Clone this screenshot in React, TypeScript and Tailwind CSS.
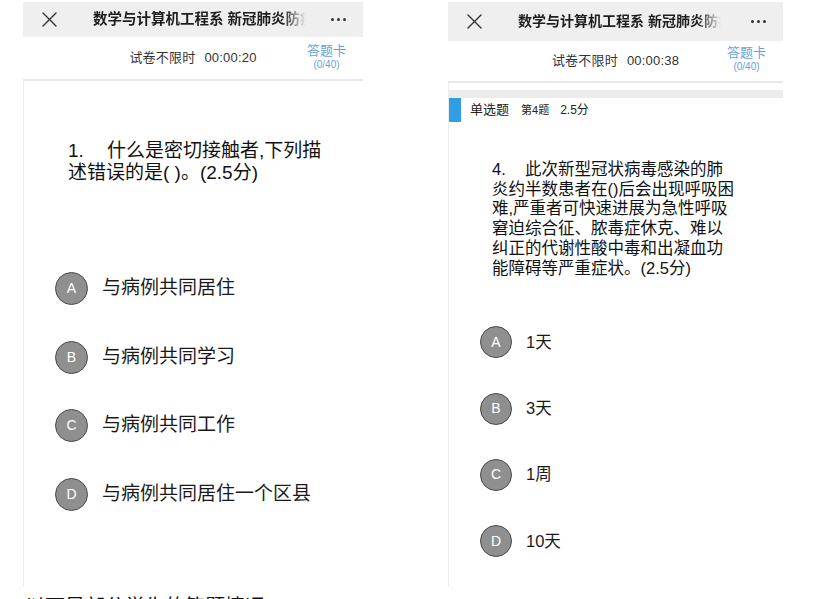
import React from "react";

const FONT = { fontFamily: '"Liberation Sans", "Noto Sans CJK SC", sans-serif' };

function XIcon() {
  return (
    <svg width="15" height="15" viewBox="0 0 15 15" fill="none">
      <path d="M1 1 L14 14 M14 1 L1 14" stroke="#333" strokeWidth="1.4" strokeLinecap="round" />
    </svg>
  );
}

function Dots() {
  return (
    <div className="flex items-center gap-[3px]">
      <span className="w-[3px] h-[3px] rounded-full bg-[#333]" />
      <span className="w-[3px] h-[3px] rounded-full bg-[#333]" />
      <span className="w-[3px] h-[3px] rounded-full bg-[#333]" />
    </div>
  );
}

function Header({ h, titleW, size }: { h: string; titleW: string; size: string }) {
  return (
    <div className={`${h} bg-[#efefef] flex items-center pl-[19px] pr-[17px]`}>
      <XIcon />
      <div
        className={`ml-[36px] ${titleW} ${size} overflow-hidden whitespace-nowrap font-semibold text-[#1e1e1e] [mask-image:linear-gradient(to_right,black_89%,transparent)]`}
      >
        数学与计算机工程系 新冠肺炎防疫知识测试
      </div>
      <div className="ml-auto">
        <Dots />
      </div>
    </div>
  );
}

function SubBar({ h, time, top }: { h: string; time: string; top: string }) {
  return (
    <div className={`${h} relative flex items-center justify-center border-b-2 border-[#e9e9e9]`}>
      <div className="text-[13px] text-[#333] tracking-[0.2px]">
        试卷不限时<span className="ml-[9px]">{time}</span>
      </div>
      <div className={`absolute right-[17px] ${top} flex flex-col items-center leading-none text-[#6a9fd8]`}>
        <span className="text-[13px]">答题卡</span>
        <span className="text-[10px] mt-[3px]">(0/40)</span>
      </div>
    </div>
  );
}

function Option({ letter, text, size, circle }: { letter: string; text: string; size: string; circle: string }) {
  return (
    <div className="flex items-center gap-[14px]">
      <div
        className={`${circle} shrink-0 rounded-full bg-[#8f8f8f] border-[1.5px] border-[#4a4a4a] flex items-center justify-center text-white text-[14px]`}
      >
        {letter}
      </div>
      <div className={`${size} text-[#1a1a1a]`}>{text}</div>
    </div>
  );
}

export default function App() {
  return (
    <div className="w-[830px] h-[599px] overflow-hidden bg-white flex flex-col" style={FONT}>
      <div className="flex pt-[2px] pl-[23px] gap-[85px]">
        {/* Left phone */}
        <div className="w-[340px] h-[585px] flex flex-col">
          <Header h="h-[35px]" titleW="w-[213px]" size="text-[14.5px]" />
          <SubBar h="h-[44px]" time="00:00:20" top="top-[7px]" />
          <div className="flex-1 border-l border-[#ececec] pl-[44px] pt-[59px]">
            <div className="text-[19px] leading-[22px] text-[#111]">
              <div>
                <span className="inline-block w-[39px]">1.</span>什么是密切接触者,下列描
              </div>
              <div>述错误的是( )。(2.5分)</div>
            </div>
            <div className="mt-[88px] -ml-[13px] flex flex-col gap-[35.5px]">
              <Option letter="A" text="与病例共同居住" size="text-[19px]" circle="w-[33px] h-[33px]" />
              <Option letter="B" text="与病例共同学习" size="text-[19px]" circle="w-[33px] h-[33px]" />
              <Option letter="C" text="与病例共同工作" size="text-[19px]" circle="w-[33px] h-[33px]" />
              <Option letter="D" text="与病例共同居住一个区县" size="text-[19px]" circle="w-[33px] h-[33px]" />
            </div>
          </div>
        </div>
        {/* Right phone */}
        <div className="w-[335px] h-[585px] flex flex-col">
          <Header h="h-[39px]" titleW="w-[203px]" size="text-[14px]" />
          <SubBar h="h-[42px]" time="00:00:38" top="top-[5px]" />
          <div className="flex-1 border-l border-[#ececec] flex flex-col">
            <div className="h-[7px]" />
            <div className="h-[8px] bg-[#ececec]" />
            <div className="flex items-center h-[24px]">
              <div className="w-[12px] h-[24px] bg-[#2f9ee3]" />
              <span className="ml-[9px] text-[13px] text-[#222]">单选题</span>
              <span className="ml-[12px] text-[11px] text-[#222]">第4题</span>
              <span className="ml-[11px] text-[12px] text-[#222]">2.5分</span>
            </div>
            <div className="pl-[43px] pt-[38px] text-[16.5px] leading-[19.7px] text-[#111]">
              <div>
                <span className="inline-block w-[33px]">4.</span>此次新型冠状病毒感染的肺
              </div>
              <div>炎约半数患者在()后会出现呼吸困</div>
              <div>难,严重者可快速进展为急性呼吸</div>
              <div>窘迫综合征、脓毒症休克、难以</div>
              <div>纠正的代谢性酸中毒和出凝血功</div>
              <div>能障碍等严重症状。(2.5分)</div>
            </div>
            <div className="mt-[48px] pl-[31px] flex flex-col gap-[34.3px]">
              <Option letter="A" text="1天" size="text-[16.5px]" circle="w-[32px] h-[32px]" />
              <Option letter="B" text="3天" size="text-[16.5px]" circle="w-[32px] h-[32px]" />
              <Option letter="C" text="1周" size="text-[16.5px]" circle="w-[32px] h-[32px]" />
              <Option letter="D" text="10天" size="text-[16.5px]" circle="w-[32px] h-[32px]" />
            </div>
          </div>
        </div>
      </div>
      <div className="mt-[8px] pl-[25px] text-[20px] leading-[24px] text-[#111] whitespace-nowrap">
        以下是部分学生的答题情况
      </div>
    </div>
  );
}
